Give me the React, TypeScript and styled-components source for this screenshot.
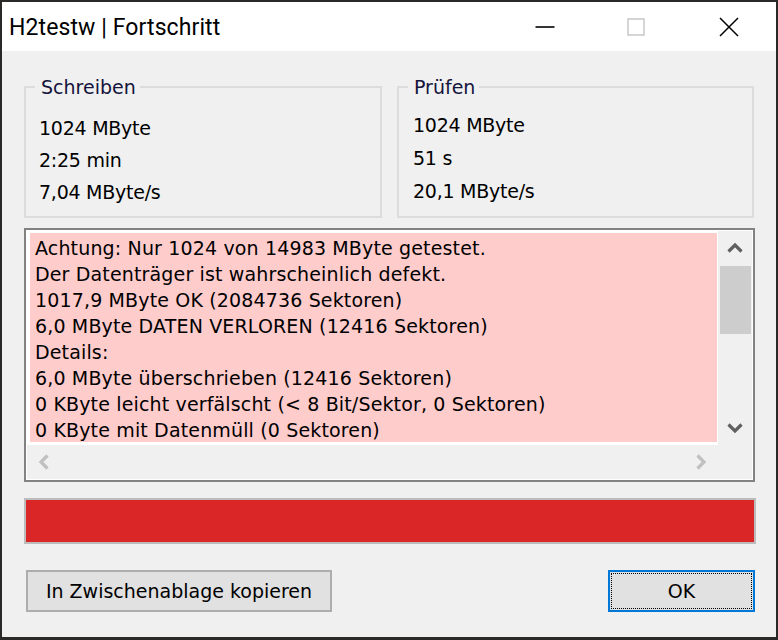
import React from 'react';
import styled, { createGlobalStyle } from 'styled-components';

const Global = createGlobalStyle`
  html, body { margin: 0; padding: 0; background: #2b2927; }
  * { box-sizing: border-box; }
`;

const Window = styled.div`
  width: 778px;
  height: 640px;
  border: 2px solid #2b2927;
  border-bottom-width: 3px;
  display: flex;
  flex-direction: column;
  background: #f0f0f0;
`;

const TitleBar = styled.div`
  height: 49px;
  flex: none;
  background: #ffffff;
  display: flex;
  align-items: center;
`;

const Title = styled.div`
  flex: 1;
  padding-left: 7px;
  padding-top: 2px;
  font-family: Roboto, "Noto Sans", sans-serif;
  font-size: 23px;
  letter-spacing: 0.1px;
  color: #000;
`;

const CaptionButton = styled.div<{ $w: number }>`
  width: ${(p) => p.$w}px;
  height: 49px;
  display: flex;
  align-items: center;
  justify-content: center;
`;

const Client = styled.div`
  flex: 1;
  padding: 25px 0 0 22px;
  display: flex;
  flex-direction: column;
  font-family: "DejaVu Sans", Verdana, sans-serif;
  font-size: 19px;
  color: #000;
`;

const Groups = styled.div`
  display: grid;
  grid-template-columns: 358px 357px;
  column-gap: 15px;
`;

const Group = styled.fieldset`
  margin: 0;
  min-width: 0;
  height: 142px;
  padding: 0;
  border: 2px solid #dcdcdc;
`;

const Legend = styled.legend`
  margin-left: 9px;
  padding: 0 4px 0 6px;
  line-height: 22px;
  color: #14143c;
`;

const Stats = styled.div<{ $pl: number; $pt: number; $lh: number }>`
  padding: ${(p) => p.$pt}px 0 0 ${(p) => p.$pl}px;
  line-height: ${(p) => p.$lh}px;
  letter-spacing: -0.25px;
`;

const Frame = styled.div`
  margin-top: 10px;
  width: 731px;
  height: 254px;
  border: 2px solid #828282;
  background: #ffffff;
  padding: 1px;
  display: grid;
  grid-template-columns: 1fr 34px;
  grid-template-rows: 1fr 34px;
`;

const TextCell = styled.div`
  background: #ffffff;
  padding: 2px 1px 3px 3px;
  min-height: 0;
`;

const Message = styled.div`
  height: 100%;
  background: #ffcccc;
  padding: 2px 0 0 5px;
  line-height: 26px;
  letter-spacing: 0.15px;
  overflow: hidden;
  white-space: nowrap;
`;

const VScroll = styled.div`
  background: #f0f0f0;
  display: flex;
  flex-direction: column;
`;

const HScroll = styled.div`
  background: #f0f0f0;
  display: flex;
  justify-content: space-between;
`;

const Corner = styled.div`
  background: #f0f0f0;
`;

const ArrowBox = styled.div`
  width: 34px;
  height: 34px;
  flex: none;
  display: flex;
  align-items: center;
  justify-content: center;
`;

const Track = styled.div`
  flex: 1;
  padding: 1px 1px 0 2px;
`;

const Thumb = styled.div`
  height: 68px;
  background: #cdcdcd;
`;

const Progress = styled.div`
  margin-top: 16px;
  width: 732px;
  height: 46px;
  border: 2px solid #bcbcbc;
  background: #da2626;
`;

const ButtonRow = styled.div`
  margin-top: 26px;
  width: 731px;
  padding-left: 2px;
  display: flex;
  justify-content: space-between;
`;

const Button = styled.div<{ $w: number; $default?: boolean }>`
  position: relative;
  width: ${(p) => p.$w}px;
  height: 42px;
  border: 2px solid ${(p) => (p.$default ? '#0078d7' : '#adadad')};
  background: #e1e1e1;
  display: flex;
  align-items: center;
  justify-content: center;
  font-size: 19px;
  color: #000;
  ${(p) =>
    p.$default
      ? `&::after {
    content: '';
    position: absolute;
    inset: 1px;
    border: 1px dotted #000;
  }`
      : ''}
`;

const Chevron = ({ dir, color }: { dir: 'up' | 'down' | 'left' | 'right'; color: string }) => {
  const pts: Record<string, string> = {
    up: '1.5,11.5 8,5 14.5,11.5',
    down: '1.5,4.5 8,11 14.5,4.5',
    left: '11.5,1.5 5,8 11.5,14.5',
    right: '4.5,1.5 11,8 4.5,14.5',
  };
  return (
    <svg width="16" height="16" viewBox="0 0 16 16">
      <polyline points={pts[dir]} fill="none" stroke={color} strokeWidth="3.2" strokeLinecap="butt" strokeLinejoin="miter" />
    </svg>
  );
};

const lines = [
  'Achtung: Nur 1024 von 14983 MByte getestet.',
  'Der Datenträger ist wahrscheinlich defekt.',
  '1017,9 MByte OK (2084736 Sektoren)',
  '6,0 MByte DATEN VERLOREN (12416 Sektoren)',
  'Details:',
  '6,0 MByte überschrieben (12416 Sektoren)',
  '0 KByte leicht verfälscht (< 8 Bit/Sektor, 0 Sektoren)',
  '0 KByte mit Datenmüll (0 Sektoren)',
];

export default function App() {
  return (
    <>
      <Global />
      <Window>
        <TitleBar>
          <Title>H2testw | Fortschritt</Title>
          <CaptionButton $w={90}>
            <svg width="20" height="4" viewBox="0 0 20 4">
              <line x1="0.5" y1="2" x2="19.5" y2="2" stroke="#000" strokeWidth="1.6" />
            </svg>
          </CaptionButton>
          <CaptionButton $w={92}>
            <svg width="18" height="18" viewBox="0 0 18 18">
              <rect x="1" y="1" width="16" height="16" fill="none" stroke="#c8c8c8" strokeWidth="1.5" />
            </svg>
          </CaptionButton>
          <CaptionButton $w={94}>
            <svg width="20" height="20" viewBox="0 0 20 20">
              <path d="M1 1 L19 19 M19 1 L1 19" stroke="#000" strokeWidth="1.5" fill="none" />
            </svg>
          </CaptionButton>
        </TitleBar>
        <Client>
          <Groups>
            <Group>
              <Legend>Schreiben</Legend>
              <Stats $pl={13} $pt={14} $lh={32}>
                <div>1024 MByte</div>
                <div>2:25 min</div>
                <div>7,04 MByte/s</div>
              </Stats>
            </Group>
            <Group>
              <Legend>Prüfen</Legend>
              <Stats $pl={14} $pt={11} $lh={33}>
                <div>1024 MByte</div>
                <div>51 s</div>
                <div>20,1 MByte/s</div>
              </Stats>
            </Group>
          </Groups>
          <Frame>
            <TextCell>
              <Message>
                {lines.map((l) => (
                  <div key={l}>{l}</div>
                ))}
              </Message>
            </TextCell>
            <VScroll>
              <ArrowBox>
                <Chevron dir="up" color="#606060" />
              </ArrowBox>
              <Track>
                <Thumb />
              </Track>
              <ArrowBox>
                <Chevron dir="down" color="#606060" />
              </ArrowBox>
            </VScroll>
            <HScroll>
              <ArrowBox>
                <Chevron dir="left" color="#c0c0c0" />
              </ArrowBox>
              <ArrowBox>
                <Chevron dir="right" color="#c0c0c0" />
              </ArrowBox>
            </HScroll>
            <Corner />
          </Frame>
          <Progress />
          <ButtonRow>
            <Button $w={306}>In Zwischenablage kopieren</Button>
            <Button $w={147} $default>
              OK
            </Button>
          </ButtonRow>
        </Client>
      </Window>
    </>
  );
}
